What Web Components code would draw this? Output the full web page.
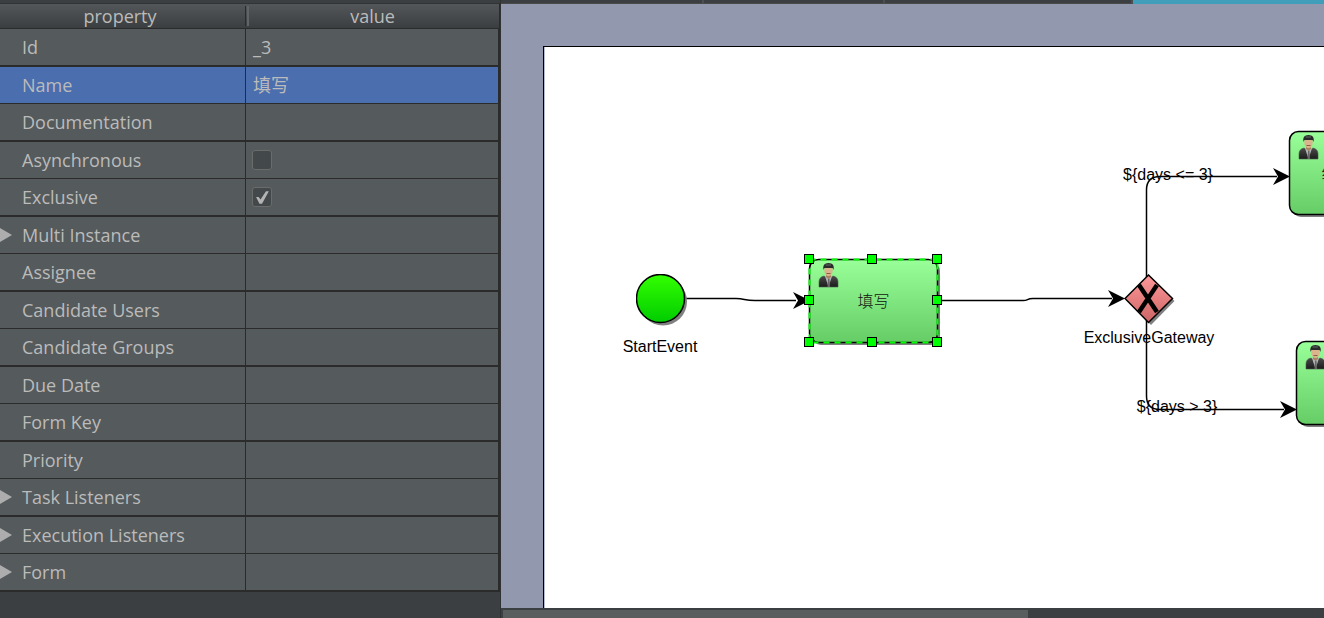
<!DOCTYPE html>
<html lang="en">
<head>
<meta charset="utf-8">
<title>Process designer</title>
<style>
  html, body { height: 100%; margin: 0; }
  body { background: #3c3f41; color: #bbb; font-family: "Open Sans", "Noto Sans CJK SC", sans-serif; overflow: hidden; }
</style>
</head>
<body>
<designer-app>
  <property-panel slot="side"></property-panel>
  <tab-strip slot="main"></tab-strip>
  <diagram-sheet slot="main">
    <flow-edges></flow-edges>
    <start-event style="left:92px;top:227px"></start-event>
    <user-task style="left:265px;top:212px" selected>填写</user-task>
    <exclusive-gateway style="left:580px;top:227px"></exclusive-gateway>
    <user-task style="left:745px;top:84px">经理审批</user-task>
    <user-task style="left:752px;top:294px"></user-task>
    <flow-label style="left:116px;top:300px">StartEvent</flow-label>
    <flow-label style="left:605px;top:291px">ExclusiveGateway</flow-label>
    <flow-label style="left:624px;top:128px">${days &lt;= 3}</flow-label>
    <flow-label style="left:633px;top:360px">${days &gt; 3}</flow-label>
  </diagram-sheet>
  <scroll-track slot="main"></scroll-track>
</designer-app>

<script>
const define = (name, html, setup) => {
  const tpl = document.createElement('template');
  tpl.innerHTML = html;
  customElements.define(name, class extends HTMLElement {
    constructor() {
      super();
      this.attachShadow({ mode: 'open' }).append(tpl.content.cloneNode(true));
      if (setup) setup(this.shadowRoot, this);
    }
  });
};

define('designer-app', `
  <style>
    :host { display: grid; grid-template-columns: 501px minmax(0, 1fr); height: 100vh; }
    aside { border-right: 1px solid #2f3133; overflow: hidden; }
    main { display: flex; flex-direction: column; min-width: 0; min-height: 0; }
  </style>
  <aside><slot name="side"></slot></aside>
  <main><slot name="main"></slot></main>`);

define('tab-strip', `
  <style>
    :host { display: flex; height: 4px; flex: none; background: #3c3f41; }
    span { box-sizing: border-box; border-bottom: 1px solid #4a4a4a; border-right: 2px solid #4c4f50; }
    span:nth-of-type(1) { flex: 202; }
    span:nth-of-type(2) { flex: 181; }
    span:nth-of-type(3) { flex: 248; }
    span:nth-of-type(4) { flex: 192; background: #409ebb; border: 0; }
  </style>
  <span></span><span></span><span></span><span></span>`);

define('scroll-track', `
  <style>
    :host { display: flex; flex: none; height: 8px; padding: 2px 0 0 2px; background: #3c3f41; }
    div { width: 64%; background: #585d5d; }
  </style>
  <div></div>`);

const rows = [
  { name: 'Id', value: '_3' },
  { name: 'Name', value: '填写', selected: true },
  { name: 'Documentation' },
  { name: 'Asynchronous', check: false },
  { name: 'Exclusive', check: true },
  { name: 'Multi Instance', group: true },
  { name: 'Assignee' },
  { name: 'Candidate Users' },
  { name: 'Candidate Groups' },
  { name: 'Due Date' },
  { name: 'Form Key' },
  { name: 'Priority' },
  { name: 'Task Listeners', group: true },
  { name: 'Execution Listeners', group: true },
  { name: 'Form', group: true }
];

define('property-panel', `
  <style>
    :host { display: block; padding-top: 3px; font-size: 18px; line-height: 24px; }
    table { width: 100%; border-collapse: separate; border-spacing: 0; table-layout: fixed; }
    col:first-child { width: 246px; }
    th { height: 24px; padding: 0; font-weight: 400; border-top: 1px solid #313335; border-bottom: 1px solid #2b2b2b; }
    thead tr { background: linear-gradient(#54585a, #3a3d3f); }
    th div { display: flex; align-items: center; justify-content: center; height: 24px; }
    th:first-child div { padding-right: 6px; }
    th:first-child { background: linear-gradient(#2b2b2b, #2b2b2b) right 0 center / 1px 20px no-repeat; }
    th:last-child { background: linear-gradient(#606466, #606466) left 1px center / 2px 20px no-repeat; border-right: 1px solid #2b2b2b; }
    td { height: 36px; padding: 0; background: #555a5c; border-bottom: 1px solid #2b2b2b; }
    tr:nth-child(odd) td { border-bottom-width: 2px; }
    td:first-child { border-right: 1px solid #2b2b2b; }
    td:last-child { border-right: 2px solid #2b2b2b; }
    tr.selected td { background: #4b6eaf; }
    .cell { display: flex; align-items: center; height: 36px; white-space: nowrap; }
    td:first-child .cell { padding-left: 22px; }
    td:first-child .group { padding-left: 0; gap: 10px; }
    td:last-child .cell { padding-left: 7px; }
    td:last-child .tick { padding-left: 6px; }
    button { width: 12px; height: 14px; padding: 0; border: 0; background: #adadad; clip-path: polygon(0 0, 100% 50%, 0 100%); }
    input { appearance: none; box-sizing: border-box; width: 20px; height: 20px; margin: 0; border: 1px solid #6b6b6b; border-radius: 3px; background: #43494a; }
    input::before { content: ""; display: block; width: 18px; height: 18px; }
    input:checked::before { background: #b4b4b4; clip-path: polygon(17% 50%, 31% 50%, 42% 64%, 72% 18%, 88% 18%, 50% 87%, 36% 87%); }
  </style>
  <table>
    <colgroup><col><col></colgroup>
    <thead><tr><th scope="col"><div>property</div></th><th scope="col"><div>value</div></th></tr></thead>
    <tbody></tbody>
  </table>`, root => {
  root.querySelector('tbody').innerHTML = rows.map((r, i) => {
    const isCheck = 'check' in r;
    const name = isCheck ? `<label for="c${i}">${r.name}</label>` : r.name;
    const toggle = r.group ? `<button type="button" aria-expanded="false" aria-label="Expand ${r.name}"></button>` : '';
    const value = isCheck ? `<input type="checkbox" id="c${i}"${r.check ? ' checked' : ''}>` : (r.value || '');
    return `<tr${r.selected ? ' class="selected"' : ''}><td><div class="cell${r.group ? ' group' : ''}">${toggle}${name}</div></td><td><div class="cell${isCheck ? ' tick' : ''}">${value}</div></td></tr>`;
  }).join('');
});

define('diagram-sheet', `
  <style>
    :host { display: flex; flex: 1; min-height: 0; padding: 42px 0 0 42px; background: #9299ae; overflow: hidden; color: #000; }
    section { position: relative; flex: 1; min-width: 0; background: #fff; border: solid #000; border-width: 1px 0 0 1px; box-shadow: inset 1px 0 #b5bccf; overflow: hidden; }
  </style>
  <section><slot></slot></section>`);

define('flow-label', `
  <style>
    :host { position: absolute; transform: translate(-50%, -50%); white-space: nowrap; font: 16px/20px "Liberation Sans", Arial, sans-serif; }
  </style>
  <slot></slot>`);

define('flow-edges', `
  <style>
    :host { position: absolute; inset: 0; }
    svg { display: block; width: 100%; height: 100%; overflow: visible; }
    .line { fill: none; stroke: #000; stroke-width: 1.5; }
  </style>
  <svg aria-hidden="true">
    <g class="line">
      <path d="M141 251.5H192C201 251.5 200 253.5 211 253.5H252"/>
      <path d="M396 253.5H479C485 253.5 482 251.5 489 251.5H568"/>
      <path d="M602.5 230V143Q602.5 129.5 616 129.5H733"/>
      <path d="M602.5 273V349Q602.5 362.5 616 362.5H740"/>
    </g>
    <path d="M249 245L266 253.5 249 262 254 253.5Z"/>
    <path d="M564 243L581 251.5 564 260 569 251.5Z"/>
    <path d="M729 121L746 129.5 729 138 734 129.5Z"/>
    <path d="M736 354L753 362.5 736 371 741 362.5Z"/>
  </svg>`);

define('start-event', `
  <style>:host { position: absolute; } svg { display: block; }</style>
  <svg width="54" height="54" role="img" aria-label="Start event">
    <defs><linearGradient id="g" x2="0" y2="1"><stop stop-color="#3f0"/><stop offset="1" stop-color="#0c0"/></linearGradient></defs>
    <circle cx="27" cy="27.5" r="24" fill="#808080"/>
    <circle cx="24.5" cy="24.5" r="24" fill="url(#g)" stroke="#000" stroke-width="1.5"/>
  </svg>`);

define('exclusive-gateway', `
  <style>:host { position: absolute; } svg { display: block; }</style>
  <svg width="54" height="54" role="img" aria-label="Exclusive gateway">
    <defs><linearGradient id="g" x2="0" y2="1"><stop stop-color="#f99"/><stop offset="1" stop-color="#c66"/></linearGradient></defs>
    <path d="M27 3.5L50.5 27 27 51 3.5 27Z" fill="#808080"/>
    <path d="M24.5 1L48.5 24.5 24.5 48.5 1 24.5Z" fill="url(#g)" stroke="#000" stroke-width="1.5"/>
    <path d="M15 11L33 38M33 11L15 38" stroke="#000" stroke-width="4.5"/>
  </svg>`);

define('user-task', `
  <style>
    :host { position: absolute; width: 129px; height: 84px; }
    svg { position: absolute; left: 0; top: 0; overflow: visible; }
    .name { position: relative; display: flex; align-items: center; justify-content: center; height: 86px; color: #111; font: 300 16px/20px "Liberation Sans", "Noto Sans CJK SC", sans-serif; }
    .marks { display: none; }
    :host([selected]) .marks { display: block; }
  </style>
  <svg width="129" height="84" aria-hidden="true">
    <defs>
      <linearGradient id="g" x2="0" y2="1"><stop stop-color="#9f9"/><stop offset="1" stop-color="#6c6"/></linearGradient>
      <linearGradient id="suit" x2="0" y2="1"><stop stop-color="#4a4a4a"/><stop offset="1" stop-color="#1c1c1c"/></linearGradient>
    </defs>
    <rect x="3" y="3" width="128" height="83" rx="9" fill="#808080"/>
    <rect x=".5" y=".5" width="128" height="83" rx="9" fill="url(#g)" stroke="#000" stroke-width="1.5"/>
    <g transform="translate(9 4)">
      <path d="M1 24V19Q1 14 6 13L10.500 16 15 13Q20 14 20 19V24Z" fill="url(#suit)" stroke="#4d5a4d" stroke-width=".6"/>
      <path d="M7 13L10.500 24 14 13Z" fill="#b4b7ba"/>
      <path d="M10 15.500H11.500L12 24H9.500Z" fill="#666"/>
      <path d="M8 11H13V14L10.500 16 8 14Z" fill="#a88360"/>
      <ellipse cx="10.500" cy="7.500" rx="4.200" ry="5.500" fill="#d9b48c"/>
      <path d="M8.500 10.500H12.500" stroke="#875f43"/>
      <path d="M5.500 7Q4 0 10.500 0 17 0 15.500 7L14.500 5H6.500Z" fill="#2a2a2a"/>
      <path d="M7.500 2H13" stroke="#626a62"/>
    </g>
    <g class="marks">
      <rect x=".5" y=".5" width="128" height="83" fill="none" stroke="#0f0" stroke-width="2" stroke-dasharray="6 5"/>
      <g fill="#0f0" stroke="#000">
        <rect x="-4.500" y="-4.500" width="9" height="9"/><rect x="58.500" y="-4.500" width="9" height="9"/><rect x="123.500" y="-4.500" width="9" height="9"/>
        <rect x="-4.500" y="36.500" width="9" height="9"/><rect x="123.500" y="36.500" width="9" height="9"/>
        <rect x="-4.500" y="78.500" width="9" height="9"/><rect x="58.500" y="78.500" width="9" height="9"/><rect x="123.500" y="78.500" width="9" height="9"/>
      </g>
    </g>
  </svg>
  <div class="name"><slot></slot></div>`);
</script>
</body>
</html>
